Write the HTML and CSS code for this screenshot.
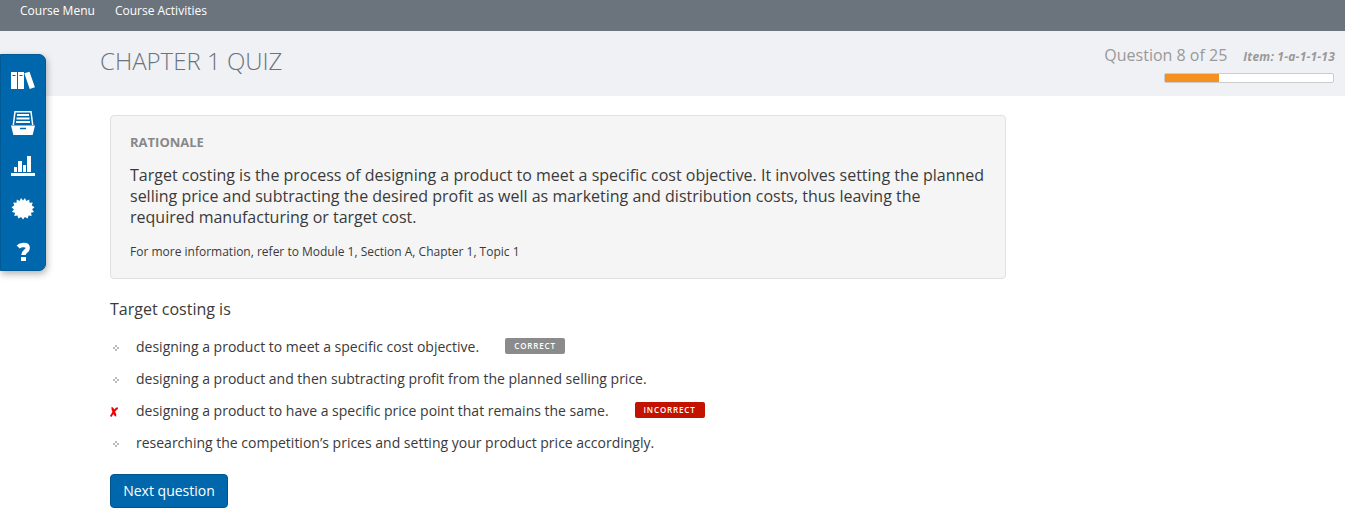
FILE: index.html
```html
<!DOCTYPE html>
<html lang="en">
<head>
<meta charset="utf-8">
<title>Chapter 1 Quiz</title>
<link rel="stylesheet" href="styles.css">
</head>
<body>
<nav class="topbar"><a>Course Menu</a><a>Course Activities</a></nav>
<header class="header">
  <h1 class="title">CHAPTER 1 QUIZ</h1>
  <div class="status">
    <div class="status-line"><span class="count">Question 8 of 25</span><span class="item">Item: 1-a-1-1-13</span></div>
    <div class="progress"><div class="progress-fill"></div></div>
  </div>
</header>
<aside class="sidebar">
  <svg class="icon" viewBox="0 0 26 26"><path fill="#fff" d="M1 5h6v17H1zM8 5h6v17H8zM14.3 6.3l5.200-1.600 5.400 15.600-5.200 1.700z"/><path stroke="#0067ac" stroke-width="1.2" d="M2.500 8.500h3M9.500 8.500h3"/></svg>
  <svg class="icon" viewBox="0 0 26 26"><path fill="none" stroke="#fff" stroke-width="1.5" d="M3.300 15L5 1.700h16L22.700 15"/><path stroke="#fff" stroke-width="2" d="M7 5h12M6.500 8.500h13M6 12h14"/><path fill="#fff" d="M1 15.500h24l-2.400 9.500H3.400z"/><path stroke="#0067ac" stroke-width="1.5" d="M10 18.500h6"/></svg>
  <svg class="icon" viewBox="0 0 26 26"><path fill="#fff" d="M1 20h24v3H1zM4 14h3v5H4zM8 8h4v11H8zM13 12h3v7h-3zM17 3h4v16h-4z"/></svg>
  <svg class="icon" viewBox="0 0 26 26"><path fill="#fff" d="M13 4.500l2-2.500 1.300 3 2.900-1.500.3 3.200 3.200-.1-.9 3 2.700 1.700-2.400 2 1.900 2.600-3 .9.700 3.100-3.200-.4-.8 3.100-2.800-1.600L13 23.500 11.100 21l-2.800 1.600-.8-3.100-3.200.4.700-3.100-3-.9 1.900-2.600-2.400-2 2.700-1.700-.9-3 3.200.1.300-3.200L9.700 5 11 2z"/></svg>
  <svg class="icon" viewBox="0 0 26 26"><path fill="none" stroke="#fff" stroke-width="4.400" d="M8.200 8C10.500 5.600 17.700 4.900 17.700 9c0 3.300-4.200 3.300-4.200 7"/><path fill="#fff" d="M11 18h5v4h-5z"/></svg>
</aside>
<main class="content">
  <section class="rationale">
    <h2>RATIONALE</h2>
    <p class="explain">Target costing is the process of designing a product to meet a specific cost objective. It involves setting the planned<br>selling price and subtracting the desired profit as well as marketing and distribution costs, thus leaving the<br>required manufacturing or target cost.</p>
    <p class="more">For more information, refer to Module 1, Section A, Chapter 1, Topic 1</p>
  </section>
  <p class="question">Target costing is</p>
  <ul class="answers">
    <li><svg class="mark" viewBox="0 0 12 12"><path fill="#bbb" d="M5 4h2v2H5zM3 6h2v2H3zM7 6h2v2H7zM5 8h2v2H5z"/></svg><span>designing a product to meet a specific cost objective.</span><b class="badge correct">CORRECT</b></li>
    <li><svg class="mark" viewBox="0 0 12 12"><path fill="#bbb" d="M5 4h2v2H5zM3 6h2v2H3zM7 6h2v2H7zM5 8h2v2H5z"/></svg><span>designing a product and then subtracting profit from the planned selling price.</span></li>
    <li><svg class="mark" viewBox="0 0 12 12"><path fill="none" stroke="#f00000" stroke-width="2.500" d="M1.500 3.300c2.500 0 2 7 4.700 7"/><path fill="none" stroke="#f00000" stroke-width="1.900" d="M7.700 3C5 4 3 8 .6 11.500"/></svg><span>designing a product to have a specific price point that remains the same.</span><b class="badge incorrect">INCORRECT</b></li>
    <li><svg class="mark" viewBox="0 0 12 12"><path fill="#bbb" d="M5 4h2v2H5zM3 6h2v2H3zM7 6h2v2H7zM5 8h2v2H5z"/></svg><span>researching the competition’s prices and setting your product price accordingly.</span></li>
  </ul>
  <button class="next">Next question</button>
</main>
</body>
</html>
```
FILE: styles.css
```css
* { box-sizing: border-box; }
body { margin: 0; height: 522px; overflow: hidden; background: #fff; color: #3a3a3a; font-family: "Open Sans", sans-serif; }
h1, h2, p, ul { margin: 0; padding: 0; }
.topbar { display: flex; gap: 20px; height: 31px; padding: 2px 20px 0; background: #6b747c; color: #fff; font-size: 12px; line-height: 18px; }
.header { display: flex; justify-content: space-between; height: 65px; padding: 0 11px 0 100px; background: #f0f1f5; }
.title { padding-top: 13px; color: #6b747c; font-size: 24px; font-weight: 300; line-height: 34px; }
.status { display: flex; flex-direction: column; align-items: flex-end; padding-top: 13px; color: #999; }
.status-line { display: flex; align-items: baseline; gap: 16px; height: 22px; margin-right: -1px; line-height: 22px; white-space: nowrap; }
.count { font-size: 16px; }
.item { font-size: 12px; font-weight: 700; font-style: italic; letter-spacing: .2px; }
.progress { width: 170px; height: 10px; margin-top: 7px; border: 1px solid #ccc; border-radius: 2px; background: #fff; }
.progress-fill { width: 32%; height: 8px; background: #f49120; }
.sidebar { position: absolute; left: 0; top: 54px; width: 46px; height: 217px; padding: 12px 10px 0; display: flex; flex-direction: column; gap: 17px; border: 1px solid #005a96; border-radius: 0 7px 7px 0; background: #0067ac; box-shadow: 1px 3px 7px rgba(0,0,0,.3); }
.icon { width: 26px; height: 26px; flex: none; margin-left: -1px; }
.content { padding: 19px 0 0 110px; }
.rationale { width: 896px; height: 164px; padding: 16px 19px; border: 1px solid #e0e0e0; border-radius: 4px; background: #f5f5f5; }
.rationale h2 { color: #888; font-size: 13px; line-height: 20px; }
.explain { margin-top: 13px; font-size: 16px; line-height: 21px; white-space: nowrap; }
.more { margin-top: 14px; font-size: 12px; line-height: 20px; }
.question { margin-top: 20px; font-size: 16px; line-height: 21px; }
.answers { margin-top: 11px; list-style: none; }
.answers li { display: flex; align-items: center; height: 32px; font-size: 14px; line-height: 20px; white-space: nowrap; }
.mark { width: 12px; height: 12px; margin-right: 14px; flex: none; }
.badge { height: 16px; margin: -2px 0 0 26px; border-radius: 2px; color: #fff; font-size: 8px; font-weight: 600; line-height: 16px; text-align: center; letter-spacing: .85px; }
.correct { width: 60px; background: #8b8b8b; }
.incorrect { width: 70px; background: #c41200; }
.next { display: block; width: 118px; height: 34px; margin-top: 15px; padding: 0 0 2px; border: 1px solid #005589; border-radius: 4px; background: #0067ac; color: #fff; font: 500 14px "Open Sans", sans-serif; }
```
